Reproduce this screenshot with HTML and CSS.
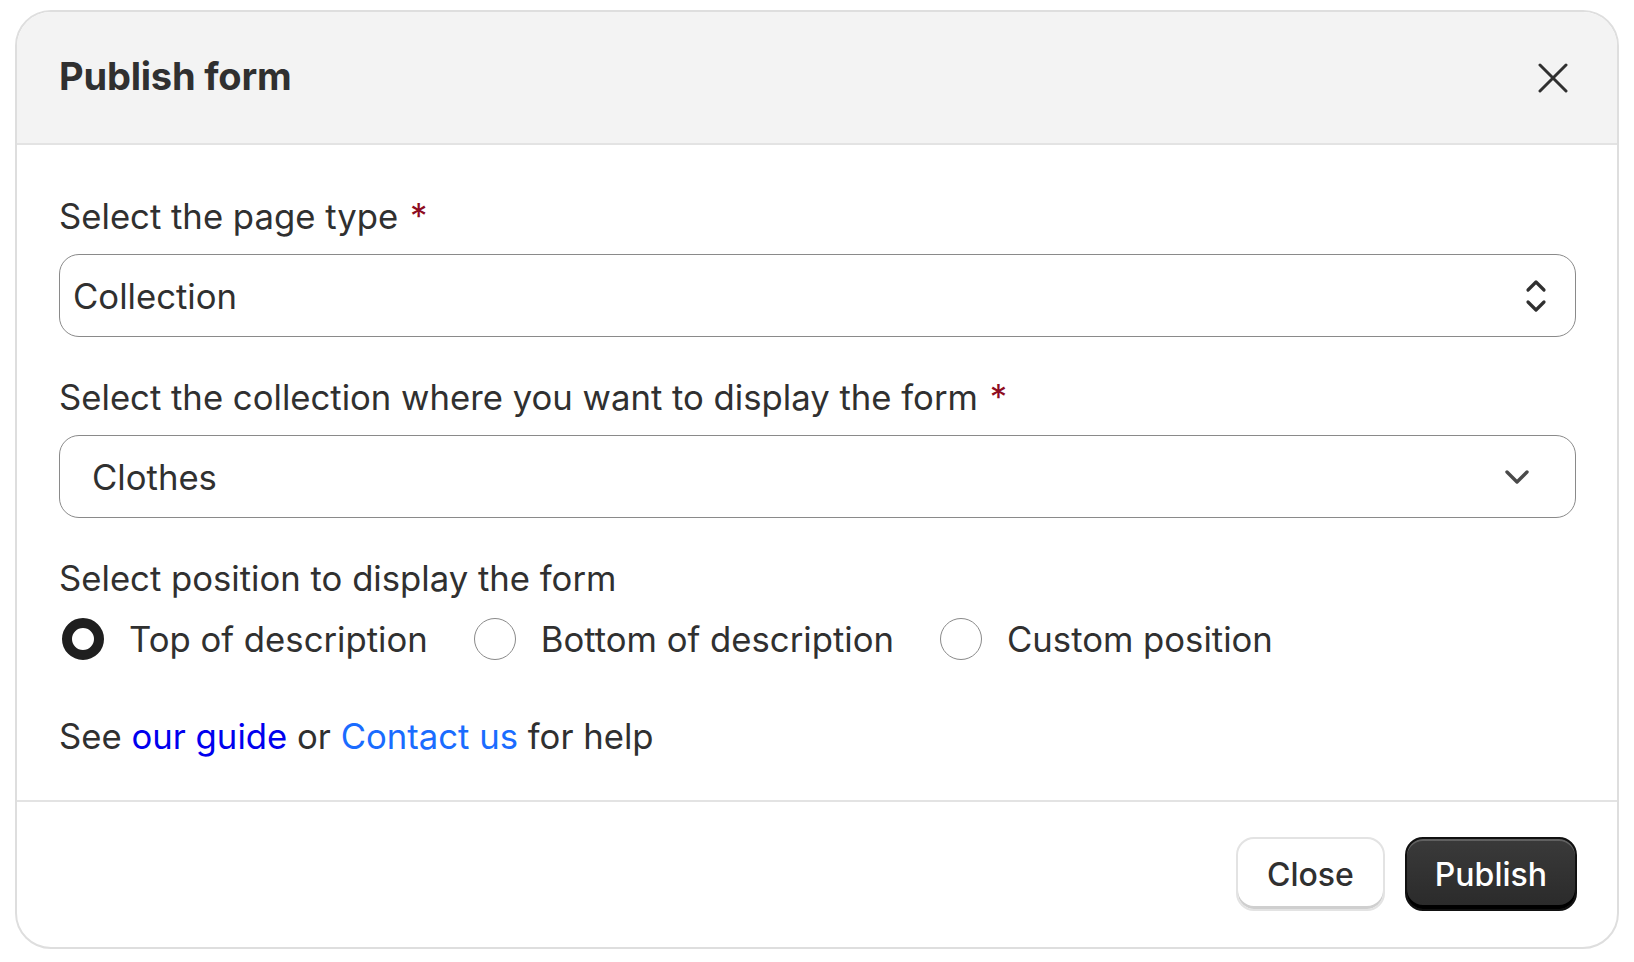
FILE: index.html
```html
<!DOCTYPE html>
<html lang="en">
	<head>
		<meta charset="UTF-8" />
		<meta name="viewport" content="width=device-width, initial-scale=1.0" />
		<title>Publish form</title>
		<link rel="stylesheet" href="styles.css">
	</head>

	<body>
		<div class="modal">
			<!-- header -->
			<div class="modal-header">
				<h2 class="modal-title">Publish form</h2>
				<button class="icon-btn" type="button" aria-label="Close">
					<svg width="30" height="30" viewBox="0 0 30 30" fill="none" stroke="#303030" stroke-width="3" stroke-linecap="round">
						<path d="M2 2 L28 28 M28 2 L2 28" />
					</svg>
				</button>
			</div>

			<!-- body -->
			<div class="modal-body">
				<div class="field">
					<div class="field-label">Select the page type <span class="req">*</span></div>
					<div class="select select-native">
						<span>Collection</span>
						<svg width="22" height="34" viewBox="0 0 22 34" fill="none" stroke="#303030" stroke-width="3.2" stroke-linecap="round" stroke-linejoin="round">
							<path d="M3 11 L11 3 L19 11" />
							<path d="M3 23 L11 31 L19 23" />
						</svg>
					</div>
				</div>

				<div class="field">
					<div class="field-label">Select the collection where you want to display the form <span class="req">*</span></div>
					<div class="select select-custom">
						<span>Clothes</span>
						<svg width="26" height="16" viewBox="0 0 26 16" fill="none" stroke="#4a4a4a" stroke-width="3.4" stroke-linecap="round" stroke-linejoin="round">
							<path d="M3 3 L13 13 L23 3" />
						</svg>
					</div>
				</div>

				<div class="field-label">Select position to display the form</div>
				<div class="radio-group">
					<label class="radio"><span class="radio-dot checked"></span>Top of description</label>
					<label class="radio"><span class="radio-dot"></span>Bottom of description</label>
					<label class="radio"><span class="radio-dot"></span>Custom position</label>
				</div>

				<p class="help">See <a href="#" class="link-guide">our guide</a> or <a href="#" class="link-contact">Contact us</a> for help</p>
			</div>

			<!-- footer -->
			<div class="modal-footer">
				<button class="btn" type="button">Close</button>
				<button class="btn btn-primary" type="button">Publish</button>
			</div>
		</div>
	</body>
</html>
```

FILE: styles.css
```css
* {
	margin: 0;
	padding: 0;
	box-sizing: border-box;
}

body {
	background: #ffffff;
	font-family: "Inter", "Noto Sans", sans-serif;
	color: #303030;
}

.modal {
	margin: 10px 15px 0 15px;
	border: 2px solid #dedede;
	border-radius: 36px;
	overflow: hidden;
	background: #ffffff;
}

.modal-header {
	height: 133px;
	display: flex;
	align-items: center;
	justify-content: space-between;
	padding: 0 49px 0 42px;
	background: #f3f3f3;
	border-bottom: 2px solid #e3e3e3;
}

.modal-title {
	font-size: 38px;
	font-weight: 650;
	letter-spacing: -0.2px;
	margin-top: -3px;
}

.icon-btn {
	border: none;
	background: none;
	display: flex;
	cursor: pointer;
}

.modal-body {
	padding: 49px 41px 42px 42px;
}

.field {
	margin-bottom: 38px;
}

.field-label {
	font-size: 34.7px;
	line-height: 44px;
}

.req {
	color: #8e0b21;
	margin-left: 2px;
}

.select {
	margin-top: 16px;
	height: 83px;
	border: 1.5px solid #8a8a8a;
	border-radius: 20px;
	display: flex;
	align-items: center;
	justify-content: space-between;
	font-size: 34.7px;
}

.select-native {
	padding: 0 28px 0 13px;
}

.select-custom {
	padding: 0 45px 0 32px;
}

.radio-group {
	display: flex;
	align-items: center;
	gap: 46px;
	margin: 17px 0 0 3px;
	height: 44px;
}

.radio {
	display: flex;
	align-items: center;
	gap: 25px;
	font-size: 34.7px;
	cursor: pointer;
}

.radio-dot {
	width: 42px;
	height: 42px;
	border-radius: 50%;
	border: 1.5px solid #8a8a8a;
	background: #ffffff;
}

.radio-dot.checked {
	border: 10px solid #1f1f1f;
}

.help {
	margin-top: 53px;
	font-size: 34.7px;
	line-height: 44px;
}

.help a {
	text-decoration: none;
}

.link-guide {
	color: #0000ee;
}

.link-contact {
	color: #1a6cff;
}

.modal-footer {
	display: flex;
	justify-content: flex-end;
	gap: 20px;
	padding: 35px 40px 36px;
	border-top: 2px solid #e3e3e3;
}

.btn {
	height: 74px;
	padding: 0 28px;
	border-radius: 18px;
	font-family: "Inter", "Noto Sans", sans-serif;
	font-size: 32px;
	font-weight: 550;
	color: #303030;
	background: #ffffff;
	border: 2px solid #e3e3e3;
	box-shadow: inset 0 -3px 0 #cfcfcf;
	cursor: pointer;
}

.btn:first-child {
	padding: 0 29px;
}

.btn-primary {
	color: #ffffff;
	background: linear-gradient(#3a3a3a, #2a2a2a);
	border: 2px solid #111111;
	box-shadow: inset 0 -4px 0 #000000, inset 0 2px 0 rgba(255, 255, 255, 0.2);
}
```
